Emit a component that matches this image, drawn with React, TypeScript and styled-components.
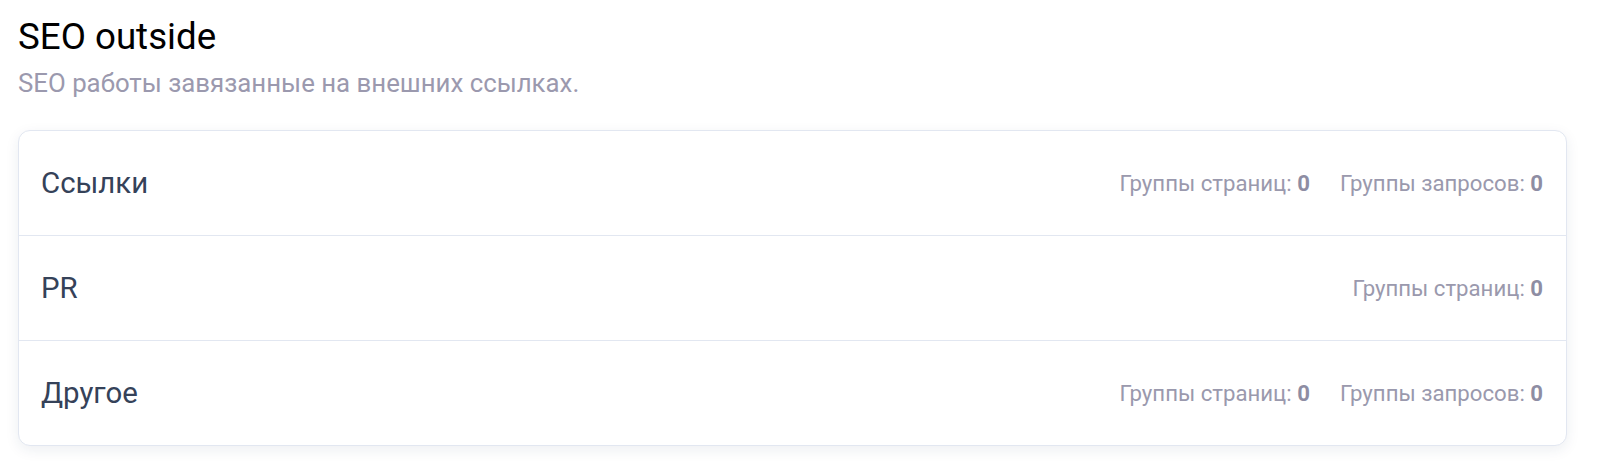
import React from "react";
import styled, { createGlobalStyle } from "styled-components";

const Global = createGlobalStyle`
  html, body { margin: 0; padding: 0; background: #ffffff; }
  body { font-family: Roboto, "Noto Sans", "Liberation Sans", sans-serif; }
`;

const Page = styled.div`
  padding: 15px 33px 20px 18px;
`;

const Title = styled.h1`
  margin: 0;
  font-size: 36.7px;
  line-height: 44px;
  font-weight: 400;
  color: #000000;
`;

const Subtitle = styled.p`
  margin: 8px 0 0 0;
  font-size: 25.8px;
  line-height: 32px;
  font-weight: 400;
  color: #9b99ae;
`;

const Card = styled.div`
  margin-top: 31px;
  background: #fff;
  border: 1px solid #e2e7f1;
  border-radius: 12px;
  box-shadow: 0 4px 14px rgba(30, 45, 90, 0.08);
  overflow: hidden;
`;

const Row = styled.div`
  display: flex;
  align-items: center;
  justify-content: space-between;
  height: 104px;
  padding: 0 23px 0 22px;
  & + & {
    border-top: 1px solid #e2e7f1;
  }
`;

const RowTitle = styled.div`
  font-size: 29.4px;
  color: #354259;
  font-weight: 400;
`;

const Stats = styled.div`
  display: flex;
  gap: 30px;
`;

const Stat = styled.span`
  font-size: 22.2px;
  color: #9a99ad;
  b {
    font-weight: 700;
    color: #8e8da3;
  }
`;

const rows = [
  { name: "Ссылки", pages: 0, queries: 0 as number | null },
  { name: "PR", pages: 0, queries: null },
  { name: "Другое", pages: 0, queries: 0 },
];

export default function App() {
  return (
    <Page>
      <Global />
      <Title>SEO outside</Title>
      <Subtitle>SEO работы завязанные на внешних ссылках.</Subtitle>
      <Card>
        {rows.map((r) => (
          <Row key={r.name}>
            <RowTitle>{r.name}</RowTitle>
            <Stats>
              <Stat>
                Группы страниц: <b>{r.pages}</b>
              </Stat>
              {r.queries !== null && (
                <Stat>
                  Группы запросов: <b>{r.queries}</b>
                </Stat>
              )}
            </Stats>
          </Row>
        ))}
      </Card>
    </Page>
  );
}
